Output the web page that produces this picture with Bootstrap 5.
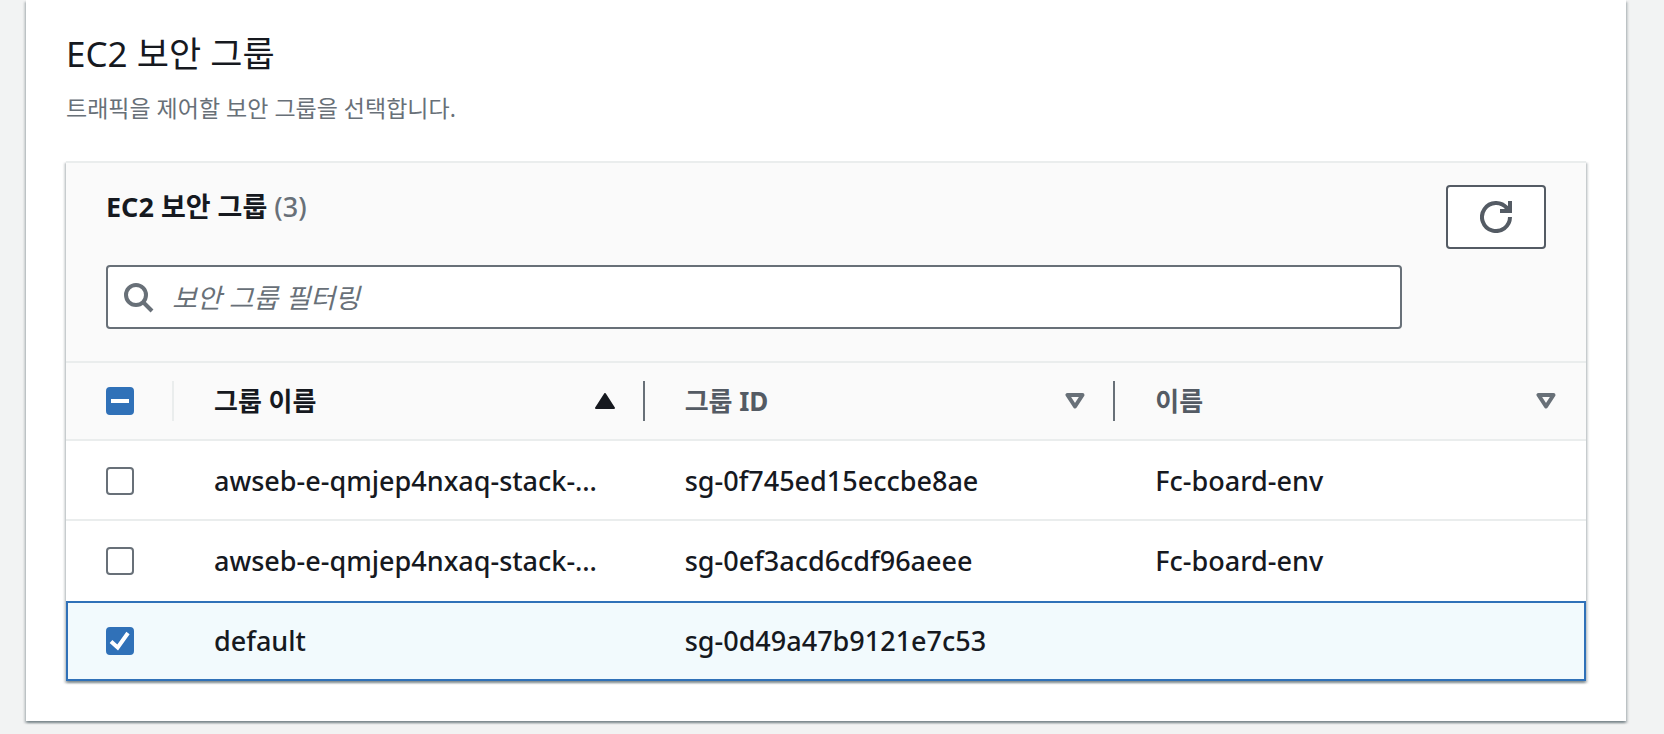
<!DOCTYPE html>
<html lang="ko">
<head>
<meta charset="utf-8">
<meta name="viewport" content="width=device-width, initial-scale=1">
<title>EC2 보안 그룹</title>
<link href="https://cdn.jsdelivr.net/npm/bootstrap@5.3.0/dist/css/bootstrap.min.css" rel="stylesheet">
<style>
  body {
    background: #f2f3f3;
    color: #16191f;
    font-family: "Noto Sans", "Noto Sans CJK KR", sans-serif;
    font-size: 27px;
    font-weight: 500;
    line-height: 40px;
  }
  .panel, .grid-box {
    box-shadow: 0 2px 2px rgba(0, 28, 36, .3), 2px 2px 2px rgba(0, 28, 36, .15), -2px 2px 2px rgba(0, 28, 36, .15);
  }
  .panel { background: #fff; margin: 0 38px 12px 26px; padding: 32px 40px 40px; }
  .panel-title { font-size: 35px; line-height: 44px; font-weight: 400; margin-bottom: 16px; }
  .panel-desc { font-size: 23px; line-height: 32px; font-weight: 400; color: #687078; margin-bottom: 37px; }
  .grid-head { background: #fafafa; border-top: 2px solid #eaeded; padding: 22px 40px 32px; gap: 44px; }
  .grid-title { font-size: 27px; line-height: 44px; font-weight: 700; margin-bottom: 36px; }
  .grid-title span { font-weight: 500; color: #687078; }
  .btn-reload { width: 100px; height: 64px; background: #fff; border: 2px solid #545b64; border-radius: 4px; color: #545b64; }
  .filter-icon { left: 18px; top: 18px; color: #687078; }
  .filter-box { height: 64px; border: 2px solid #687078; border-radius: 4px; padding: 0 16px 0 64px; font-size: 27px; color: #16191f; }
  .filter-box::placeholder { color: #687078; font-style: italic; opacity: 1; }
  .sg-table { table-layout: fixed; border-collapse: separate; border-spacing: 0; }
  .sg-table th, .sg-table td { height: 80px; padding: 2px 0 0 40px; border-bottom: 2px solid #eaeded; vertical-align: middle; white-space: nowrap; }
  .sg-table th { background: #fafafa; border-top: 2px solid #eaeded; color: #545b64; padding-top: 0; }
  .sg-table .pick-col { width: 108px; }
  .sg-table .before-chosen td { border-bottom-color: transparent; }
  .sg-table .chosen td { background: #f2fafd; border-top: 2px solid #3071b8; border-bottom-color: #3071b8; padding-top: 0; }
  .sg-table .chosen td:first-child { border-left: 2px solid #3071b8; padding-left: 38px; }
  .sg-table .chosen td:last-child { border-right: 2px solid #3071b8; }
  .head-cell { height: 40px; padding-right: 28px; border-right: 2px solid #687078; }
  .head-cell.soft { border-color: #eaeded; }
  .head-cell.bare { border-color: transparent; }
  .sort-btn { font-size: 26px; font-weight: 700; color: inherit; line-height: 40px; }
  .sort-btn.active { color: #16191f; }
  .pick.form-check-input { width: 28px; height: 28px; margin: 0; border: 2px solid #687078; border-radius: 4px; display: block; }
  .pick.form-check-input:checked, .pick.form-check-input:indeterminate { background-color: #3071b8; border-color: #3071b8; background-size: 28px 28px; background-position: center; background-origin: border-box; }
  .pick.form-check-input:checked { background-image: url("data:image/svg+xml,%3csvg xmlns='http://www.w3.org/2000/svg' viewBox='0 0 28 28'%3e%3cpath fill='none' stroke='%23fff' stroke-width='4' d='M5 14.5 11.7 20.5 22 6'/%3e%3c/svg%3e"); }
  .pick.form-check-input:indeterminate { background-image: url("data:image/svg+xml,%3csvg xmlns='http://www.w3.org/2000/svg' viewBox='0 0 28 28'%3e%3cpath fill='%23fff' d='M5 12h18v4H5z'/%3e%3c/svg%3e"); }
</style>
</head>
<body>
<main class="panel">
  <h2 class="panel-title">EC2 보안 그룹</h2>
  <p class="panel-desc">트래픽을 제어할 보안 그룹을 선택합니다.</p>

  <section class="grid-box">
    <div class="grid-head d-flex align-items-start">
      <div class="flex-grow-1">
        <h3 class="grid-title">EC2 보안 그룹 <span>(3)</span></h3>
        <div class="position-relative">
          <svg class="filter-icon position-absolute" width="30" height="30" viewBox="0 0 30 30" fill="none" stroke="currentColor" stroke-width="4" aria-hidden="true"><circle cx="12" cy="12" r="10"/><path d="M19 19l9 9"/></svg>
          <input type="search" class="filter-box form-control" placeholder="보안 그룹 필터링" aria-label="보안 그룹 필터링">
        </div>
      </div>
      <button type="button" class="btn-reload btn d-flex align-items-center justify-content-center p-0" aria-label="새로 고침">
        <svg width="32" height="32" viewBox="0 0 32 32" fill="none" stroke="currentColor" stroke-width="4" aria-hidden="true"><path d="M30 16a14 14 0 1 1-3-8.660"/><path d="M28 0h4v12H20V8h6l-1-4 3 1z" fill="currentColor" stroke="none"/></svg>
      </button>
    </div>

    <table class="sg-table w-100">
      <thead>
        <tr>
          <th class="pick-col"><div class="head-cell soft d-flex align-items-center"><input type="checkbox" class="pick form-check-input" id="pickAll" aria-label="모두 선택"></div></th>
          <th><div class="head-cell d-flex align-items-center">
            <button type="button" class="sort-btn active btn border-0 p-0 w-100 d-flex align-items-center justify-content-between">그룹 이름
              <svg width="20" height="16" viewBox="0 0 20 16" fill="currentColor" stroke="currentColor" stroke-width="2" stroke-linejoin="round" aria-hidden="true"><path d="M10 1l9 14H1z"/></svg></button></div></th>
          <th><div class="head-cell d-flex align-items-center">
            <button type="button" class="sort-btn btn border-0 p-0 w-100 d-flex align-items-center justify-content-between">그룹 ID
              <svg width="20" height="16" viewBox="0 0 20 16" fill="none" stroke="#687078" stroke-width="4" stroke-linejoin="round" aria-hidden="true"><path d="M2.500 2h15L10 13.500z"/></svg></button></div></th>
          <th><div class="head-cell bare d-flex align-items-center">
            <button type="button" class="sort-btn btn border-0 p-0 w-100 d-flex align-items-center justify-content-between">이름
              <svg width="20" height="16" viewBox="0 0 20 16" fill="none" stroke="#687078" stroke-width="4" stroke-linejoin="round" aria-hidden="true"><path d="M2.500 2h15L10 13.500z"/></svg></button></div></th>
        </tr>
      </thead>
      <tbody>
        <tr>
          <td class="pick-col"><input type="checkbox" class="pick form-check-input" aria-label="sg-0f745ed15eccbe8ae"></td>
          <td>awseb-e-qmjep4nxaq-stack-…</td>
          <td>sg-0f745ed15eccbe8ae</td>
          <td>Fc-board-env</td>
        </tr>
        <tr class="before-chosen">
          <td class="pick-col"><input type="checkbox" class="pick form-check-input" aria-label="sg-0ef3acd6cdf96aeee"></td>
          <td>awseb-e-qmjep4nxaq-stack-…</td>
          <td>sg-0ef3acd6cdf96aeee</td>
          <td>Fc-board-env</td>
        </tr>
        <tr class="chosen">
          <td class="pick-col"><input type="checkbox" class="pick form-check-input" aria-label="sg-0d49a47b9121e7c53" checked></td>
          <td>default</td>
          <td>sg-0d49a47b9121e7c53</td>
          <td></td>
        </tr>
      </tbody>
    </table>
  </section>
</main>
<script src="https://cdn.jsdelivr.net/npm/bootstrap@5.3.0/dist/js/bootstrap.bundle.min.js"></script>
<script>
  document.getElementById('pickAll').indeterminate = true;
</script>
</body>
</html>
